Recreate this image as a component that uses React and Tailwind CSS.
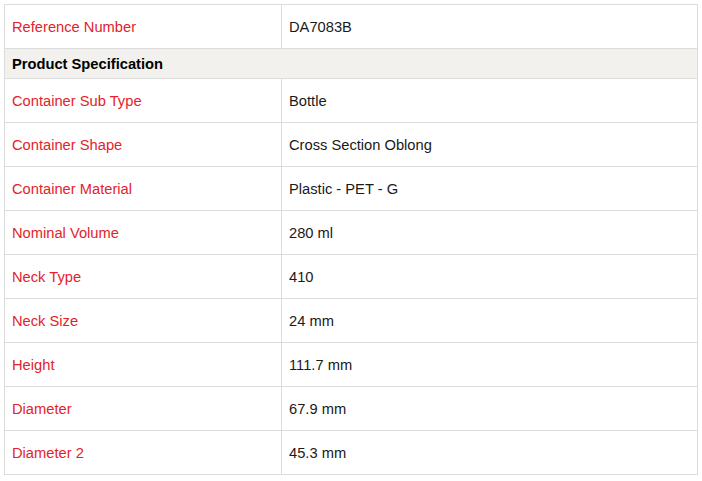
const ROWS = [
  ['Container Sub Type', 'Bottle'],
  ['Container Shape', 'Cross Section Oblong'],
  ['Container Material', 'Plastic - PET - G'],
  ['Nominal Volume', '280 ml'],
  ['Neck Type', '410'],
  ['Neck Size', '24 mm'],
  ['Height', '111.7 mm'],
  ['Diameter', '67.9 mm'],
  ['Diameter 2', '45.3 mm'],
]

function Row({ label, value }) {
  return (
    <div className="flex h-[44px] border-t border-[#dcdcdc]">
      <div className="w-[276px] shrink-0 flex items-center px-[7px] pt-[2px] text-[#e3232b]">{label}</div>
      <div className="flex-1 flex items-center px-[7px] pt-[2px] border-l border-[#dcdcdc] text-[#1a1a1a]">{value}</div>
    </div>
  )
}

export default function App() {
  return (
    <div className="bg-white w-[702px] h-[481px] p-1" style={{ fontFamily: '"Liberation Sans", Arial, sans-serif' }}>
      <div className="border border-[#dcdcdc] text-[14.7px] leading-none">
        <div className="flex h-[43px]">
          <div className="w-[276px] shrink-0 flex items-center px-[7px] pt-[2px] text-[#e3232b]">Reference Number</div>
          <div className="flex-1 flex items-center px-[7px] pt-[2px] border-l border-[#dcdcdc] text-[#1a1a1a]">DA7083B</div>
        </div>
        {/* Section header */}
        <div className="h-[30px] border-t border-[#dcdcdc] bg-[#f2f1ee] flex items-center px-[7px] pt-[2px] font-bold text-black">
          Product Specification
        </div>
        {ROWS.map(([label, value]) => (
          <Row key={label} label={label} value={value} />
        ))}
      </div>
    </div>
  )
}
